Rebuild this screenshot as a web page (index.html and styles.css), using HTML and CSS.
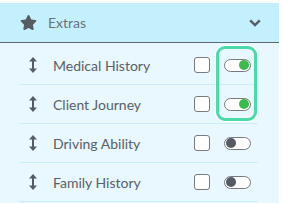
FILE: index.html
```html
<!DOCTYPE html>
<html>
<head>
<meta charset="utf-8">
<link rel="stylesheet" href="styles.css">
</head>
<body>
<div class="panel">
  <div class="header">
    <svg class="star" viewBox="0 0 576 512" width="17" height="15"><path fill="#555c63" d="M259.3 17.8L194 150.2 47.9 171.5c-26.2 3.8-36.7 36.1-17.7 54.6l105.7 103-25 145.5c-4.5 26.3 23.2 46 46.4 33.7L288 439.6l130.7 68.7c23.2 12.2 50.9-7.4 46.4-33.7l-25-145.5 105.7-103c19-18.5 8.5-50.8-17.7-54.6L382 150.2 316.7 17.8c-11.7-23.6-45.6-23.9-57.4 0z"/></svg>
    <span class="title">Extras</span>
    <svg class="chev" viewBox="0 0 12 8" width="12" height="8"><path d="M1.2 1.3 L6 6 L10.8 1.3" fill="none" stroke="#555c63" stroke-width="2.4"/></svg>
  </div>
  <div class="list">
    <div class="row">
      <svg class="sort" viewBox="0 0 8 16" width="8" height="16"><path fill="#555c63" d="M4 0 L8 4.5 H5 V11.5 H8 L4 16 L0 11.5 H3 V4.5 H0 Z"/></svg>
      <span class="label">Medical History</span>
      <span class="check"></span>
      <span class="toggle on"><span class="knob"></span></span>
    </div>
    <div class="row">
      <svg class="sort" viewBox="0 0 8 16" width="8" height="16"><path fill="#555c63" d="M4 0 L8 4.5 H5 V11.5 H8 L4 16 L0 11.5 H3 V4.5 H0 Z"/></svg>
      <span class="label">Client Journey</span>
      <span class="check"></span>
      <span class="toggle on"><span class="knob"></span></span>
    </div>
    <div class="row">
      <svg class="sort" viewBox="0 0 8 16" width="8" height="16"><path fill="#555c63" d="M4 0 L8 4.5 H5 V11.5 H8 L4 16 L0 11.5 H3 V4.5 H0 Z"/></svg>
      <span class="label">Driving Ability</span>
      <span class="check"></span>
      <span class="toggle"><span class="knob"></span></span>
    </div>
    <div class="row">
      <svg class="sort" viewBox="0 0 8 16" width="8" height="16"><path fill="#555c63" d="M4 0 L8 4.5 H5 V11.5 H8 L4 16 L0 11.5 H3 V4.5 H0 Z"/></svg>
      <span class="label">Family History</span>
      <span class="check"></span>
      <span class="toggle"><span class="knob"></span></span>
    </div>
  </div>
  <div class="highlight"></div>
</div>
</body>
</html>
```
FILE: styles.css
```css
html, body {
  margin: 0;
  padding: 0;
  background: #ffffff;
}
body {
  font-family: Lato, "Open Sans", sans-serif;
  padding-top: 3px;
}
.panel {
  position: relative;
  width: 279px;
  background: #e8f8fe;
  height: 200px;
}
.header {
  height: 39px;
  background: #c4f0fd;
  border-bottom: 1px solid #5d6a72;
  display: flex;
  align-items: center;
  padding-left: 20px;
  padding-right: 18px;
}
.star {
  display: block;
}
.title {
  margin-left: 11px;
  font-size: 14px;
  color: #6a7378;
  flex: 1;
}
.chev {
  display: block;
}
.list {
  padding-top: 3px;
  margin: 0 21px 0 20px;
}
.row {
  height: 38px;
  border-bottom: 1px solid #c8eefa;
  display: flex;
  align-items: center;
}
.sort {
  display: block;
  margin-left: 9px;
}
.label {
  margin-left: 16px;
  font-size: 14px;
  color: #596168;
  flex: 1;
}
.check {
  width: 14px;
  height: 14px;
  border: 1px solid #777c80;
  border-radius: 3px;
  background: #ffffff;
}
.toggle {
  margin-left: 14px;
  margin-right: 7px;
  width: 23px;
  height: 11px;
  border: 1px solid #777c80;
  border-radius: 7px;
  background: #ffffff;
  display: flex;
  align-items: center;
  padding: 0 1px;
}
.knob {
  width: 10px;
  height: 10px;
  border-radius: 50%;
  background: #545b63;
}
.toggle.on {
  justify-content: flex-end;
}
.toggle.on .knob {
  background: #3dba4c;
}
.highlight {
  position: absolute;
  left: 216px;
  top: 43px;
  width: 35px;
  height: 69px;
  border: 3px solid #4dd9a9;
  border-radius: 9px;
  box-shadow: 0 0 0 1px #ffffff;
}
```
